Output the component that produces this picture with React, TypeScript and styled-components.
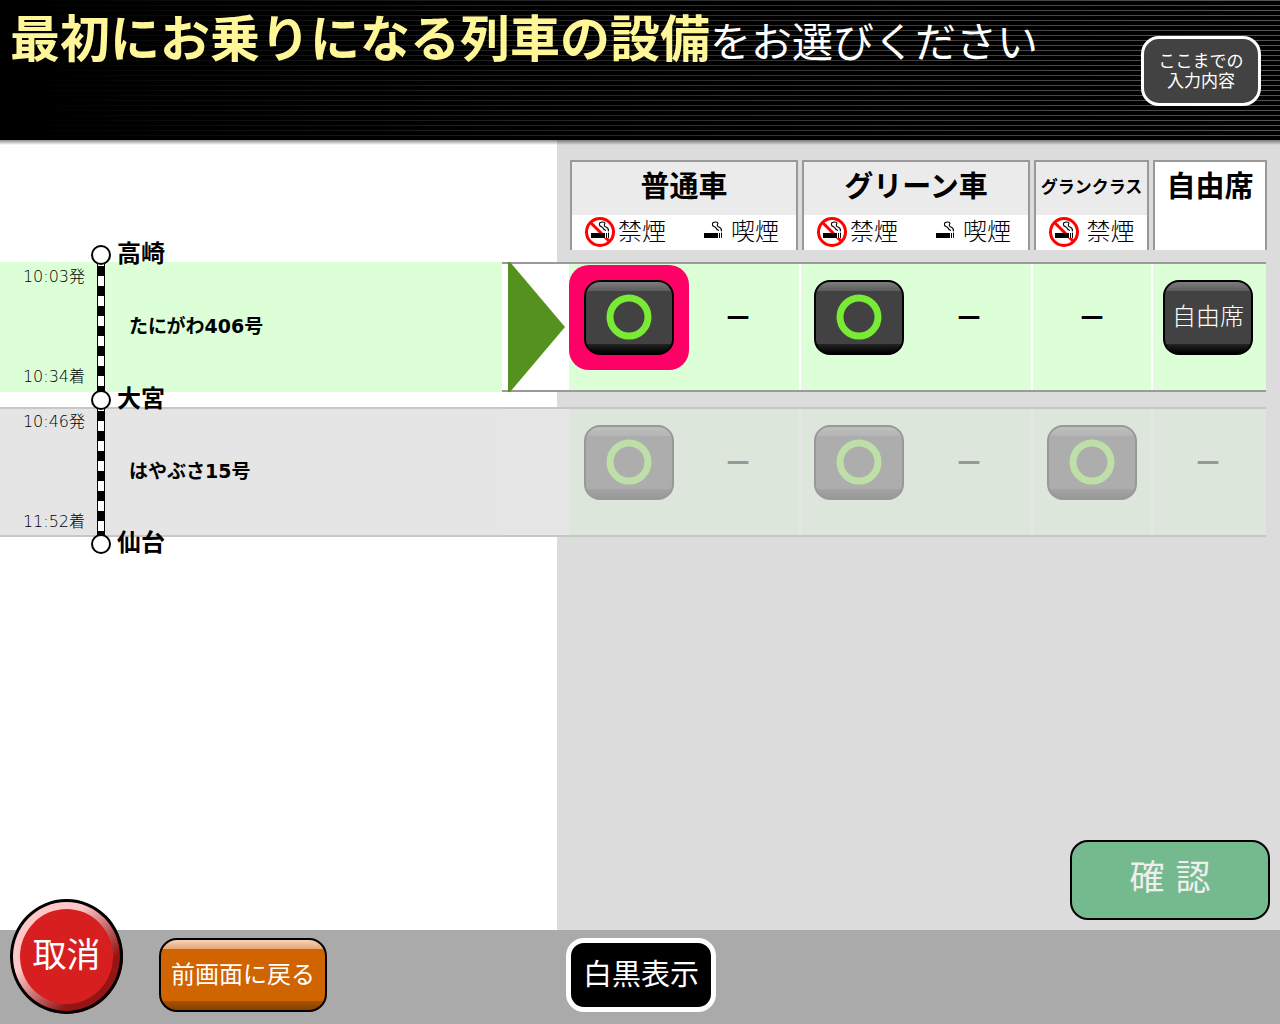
import React from "react";
import styled, { createGlobalStyle, css } from "styled-components";

const GlobalStyle = createGlobalStyle`
  *, *::before, *::after { box-sizing: border-box; }
  body {
    margin: 0;
    background: #dcdcdc;
    color: #000;
    font-family: "DejaVu Sans", "Noto Sans CJK JP", sans-serif;
    font-weight: 400;
  }
  button { font: inherit; padding: 0; cursor: pointer; }
  button:disabled { cursor: default; }
`;

const LINE = "#999";
const AVAILABLE = "#dcffd8";
const PANEL = "#dcdcdc";

const Page = styled.div`
  display: flex;
  flex-direction: column;
  min-height: 100vh;
`;

const Header = styled.header`
  display: flex;
  justify-content: space-between;
  align-items: flex-start;
  min-height: 140px;
  padding: 0 19px 0 10px;
  color: #fff;
  background:
    linear-gradient(to right, #000 20px, transparent),
    repeating-linear-gradient(to bottom, #555 0 1px, #000 1px 5px);
`;

const Title = styled.h1`
  margin: 10px 0 0;
  font-size: 41px;
  line-height: 60px;
  font-weight: 400;
`;

const TitleTarget = styled.strong`
  font-size: 50px;
  font-weight: 700;
  color: #fff797;
`;

const SummaryButton = styled.button`
  flex: none;
  width: 120px;
  height: 70px;
  margin-top: 36px;
  padding-bottom: 1px;
  border: 3px solid #fff;
  border-radius: 18px;
  background: #424242;
  color: #fff;
  font-size: 17px;
  line-height: 20px;
`;

const Main = styled.main`
  flex: 1;
  display: flex;
  flex-direction: column;
  padding-top: 15px;
  background: linear-gradient(to right, #fff calc(100% - 723px), ${PANEL} 0);

  &::before {
    content: "";
    height: 5px;
    margin-top: -15px;
    margin-bottom: 15px;
    background: linear-gradient(to bottom, rgba(0, 0, 0, 0.45), rgba(0, 0, 0, 0));
  }
`;

const SeatTable = styled.table`
  display: block;
`;

const TableHead = styled.thead`
  display: block;
`;

const HeadRow = styled.tr`
  display: grid;
  grid-template-columns: 1fr 228px 228px 115px 114px;
  column-gap: 4px;
  padding-right: 13px;
`;

const HeadSpace = styled.td`
  padding: 0;
`;

const HeadCell = styled.th<{ $plain?: boolean }>`
  height: 90px;
  padding: 0;
  border: 2px solid ${LINE};
  border-bottom: 0;
  background: ${({ $plain }) => ($plain ? "#fff" : "#ebebeb")};
  font-weight: 300;
`;

const ClassName = styled.div<{ $small?: boolean }>`
  height: 53px;
  font-size: ${({ $small }) => ($small ? 17 : 29)}px;
  line-height: 50px;
  font-weight: 700;
  text-align: center;
  white-space: nowrap;
`;

const SmokingList = styled.div<{ $single?: boolean }>`
  display: flex;
  align-items: flex-start;
  height: 35px;
  gap: 32px;
  padding-top: 2px;
  padding-left: ${({ $single }) => ($single ? 0 : 13)}px;
  justify-content: ${({ $single }) => ($single ? "center" : "flex-start")};
  background: #fff;
`;

const SmokingItem = styled.span<{ $gap: number }>`
  display: flex;
  align-items: flex-start;
  gap: ${({ $gap }) => $gap}px;
  font-size: 24px;
  line-height: 30px;
`;

const TableBody = styled.tbody`
  display: flex;
  flex-direction: column;
  gap: 15px;
  padding-top: 12px;
`;

const TrainRow = styled.tr`
  display: grid;
  grid-template-columns: 1fr 67px 232px 232px 120px 113px;
  height: 130px;
  padding-right: 14px;
`;

const RouteCell = styled.th<{ $active: boolean }>`
  position: relative;
  display: grid;
  grid-template-columns: 85px 8px 1fr;
  column-gap: 12px;
  padding: 0;
  font-weight: 300;
  text-align: left;
  ${({ $active }) =>
    $active
      ? css`
          background: ${AVAILABLE};
        `
      : css`
          background: #e5e5e5;
          box-shadow: inset 0 2px #c8c8c8, inset 0 -2px #c8c8c8;
        `}
`;

const Times = styled.div`
  display: flex;
  flex-direction: column;
  justify-content: space-between;
  align-items: flex-end;
  padding: 5px 0;
  font-size: 16px;
  line-height: 20px;
`;

const Rail = styled.div`
  border: solid #000;
  border-width: 0 1px;
  background: repeating-linear-gradient(
    to bottom,
    #fff 0 4px,
    #000 4px 14px,
    #fff 14px 20px
  );
`;

const TrainName = styled.div`
  align-self: center;
  padding: 0 0 2px 12px;
  font-size: 19px;
  line-height: 24px;
  font-weight: 700;
`;

const Station = styled.div<{ $end?: boolean }>`
  position: absolute;
  z-index: 1;
  left: 91px;
  ${({ $end }) => ($end ? "bottom: -17px;" : "top: -17px;")}
  display: flex;
  align-items: flex-start;
  gap: 6px;
  height: 20px;
  font-size: 24px;
  line-height: 18px;
  font-weight: 700;

  &::before {
    content: "";
    width: 20px;
    height: 20px;
    border: 2px solid #000;
    border-radius: 50%;
    background: #fff;
  }
`;

const PointerCell = styled.td`
  padding: 0;
  background: ${PANEL};
`;

const SeatCell = styled.td`
  padding: 0;
  background: ${PANEL};
`;

const Fade = styled.div<{ $off: boolean; $white?: boolean; $last?: boolean }>`
  height: 100%;
  display: flex;
  border: solid ${LINE};
  border-width: 2px 0;
  background: ${({ $white }) => ($white ? "#fff" : AVAILABLE)};
  opacity: ${({ $off }) => ($off ? 0.3 : 1)};

  &::after {
    content: "";
    flex: none;
    width: ${({ $white, $last }) => ($white || $last ? 0 : 2)}px;
    background: #fff;
  }
`;

const Arrow = styled.svg`
  flex: none;
  margin: -2px 0 -2px 6px;
`;

const Slots = styled.div<{ $columns: string }>`
  flex: 1;
  display: grid;
  grid-template-columns: ${({ $columns }) => $columns};
  grid-template-rows: 107px;
  align-items: center;
  justify-items: center;
`;

const Selection = styled.div<{ $on: boolean }>`
  padding: 15px;
  border-radius: 20px;
  background: ${({ $on }) => ($on ? "#ff0066" : "transparent")};
`;

const SeatButton = styled.button`
  display: flex;
  align-items: center;
  justify-content: center;
  width: 90px;
  height: 75px;
  padding-bottom: 2px;
  border: 2px solid #000;
  border-radius: 16px;
  background: linear-gradient(
    to bottom,
    #7c7c7c,
    #5c5c5c 9px,
    #424242 9px calc(100% - 9px),
    #242424 calc(100% - 9px),
    #000
  );
  color: #fff;
  font-size: 24px;
  line-height: 32px;
  font-weight: 300;
`;

const Dash = styled.span`
  padding-top: 2px;
  font-size: 29px;
  line-height: 32px;
  font-weight: 700;
`;

const ConfirmButton = styled.button`
  align-self: flex-end;
  width: 200px;
  height: 80px;
  margin: auto 10px 10px 0;
  padding-bottom: 4px;
  border: 2px solid #000;
  border-radius: 18px;
  background: #75b98e;
  color: #eee;
  font-size: 35px;
  line-height: 48px;
`;

const Footer = styled.footer`
  display: grid;
  grid-template-columns: 1fr auto 1fr;
  align-items: start;
  min-height: 94px;
  padding: 8px 0 12px 2px;
  background: #aaa;
`;

const FooterLeft = styled.div`
  display: flex;
  align-items: flex-start;
  gap: 36px;
  height: 74px;
  padding-left: 8px;
`;

const CancelButton = styled.button`
  flex: none;
  width: 113px;
  height: 115px;
  margin-top: -39px;
  padding-bottom: 3px;
  border: 10px solid transparent;
  border-radius: 50%;
  background:
    linear-gradient(#d71f1f, #d71f1f) padding-box,
    linear-gradient(135deg, #ffc8c8 35%, #951414 72%) border-box;
  color: #fff;
  font-size: 34px;
  line-height: 48px;
  outline: 3px solid #000;
  outline-offset: -3px;
`;

const BackButton = styled.button`
  flex: none;
  width: 168px;
  height: 74px;
  padding-bottom: 1px;
  border: 2px solid #000;
  border-radius: 18px;
  background: linear-gradient(
    to bottom,
    #fbd3b4,
    #e3a677 9px,
    #d06400 9px calc(100% - 9px),
    #ab5200 calc(100% - 9px),
    #854000
  );
  color: #fff;
  font-size: 24px;
  line-height: 32px;
`;

const ContrastButton = styled.button`
  width: 150px;
  height: 74px;
  padding-bottom: 1px;
  border: 5px solid #fff;
  border-radius: 18px;
  background: #000;
  color: #fff;
  font-size: 29px;
  line-height: 40px;
`;

function SmokingIcon({ banned }: { banned: boolean }) {
  return (
    <svg width="30" height="30" viewBox="0 0 30 30" aria-hidden="true">
      {banned && (
        <g fill="none" stroke="#f00" strokeWidth="3">
          <circle cx="15" cy="15" r="13.5" />
          <path d="M5.5 5.5 24.5 24.5" />
        </g>
      )}
      <path d="M6 16h14v5H6z" />
      <path d="M20 16h1v5h-1zM22 16h1v5h-1z" fill="#fff" />
      <path d="M21 16h1v5h-1zM23 16h1v5h-1z" />
      <path d="M23.5 12v4" stroke="#aaa" strokeWidth="1" />
      <g fill="none" stroke="#000" strokeWidth="1.1">
        <path d="M18 5c-3 0-4 1-3.500 3s3 1.500 3.500 3 1 2 3 2.500" />
        <path d="M18 5c2.500.5 2 1.500 1.500 2.500s0 2 1.500 2.500 2.500 1.500 2.500 4" />
      </g>
    </svg>
  );
}

function Ring() {
  return (
    <svg width="46" height="46" viewBox="0 0 46 46" aria-hidden="true">
      <circle cx="23" cy="23" r="19" fill="none" stroke="#7aeb34" strokeWidth="7" />
    </svg>
  );
}

type Slot = "open" | "none" | "free";

interface Train {
  name: string;
  from: string;
  to?: string;
  departs: string;
  arrives: string;
  active: boolean;
  seats: Slot[][];
}

const SLOT_COLUMNS = ["120px 98px", "116px 104px", "118px", "110px"];
const CLASS_NAMES = ["普通車", "グリーン車", "グランクラス", "自由席"];

const trains: Train[] = [
  {
    name: "たにがわ406号",
    from: "高崎",
    departs: "10:03発",
    arrives: "10:34着",
    active: true,
    seats: [["open", "none"], ["open", "none"], ["none"], ["free"]],
  },
  {
    name: "はやぶさ15号",
    from: "大宮",
    to: "仙台",
    departs: "10:46発",
    arrives: "11:52着",
    active: false,
    seats: [["open", "none"], ["open", "none"], ["open"], ["none"]],
  },
];

export default function App() {
  const [selected, setSelected] = React.useState("0-0-0");

  return (
    <Page>
      <GlobalStyle />
      <Header>
        <Title>
          <TitleTarget>最初にお乗りになる列車の設備</TitleTarget>をお選びください
        </Title>
        <SummaryButton type="button">
          ここまでの
          <br />
          入力内容
        </SummaryButton>
      </Header>

      <Main>
        <SeatTable>
          <TableHead>
            <HeadRow>
              <HeadSpace />
              {CLASS_NAMES.slice(0, 2).map((name) => (
                <HeadCell key={name} scope="col">
                  <ClassName>{name}</ClassName>
                  <SmokingList>
                    <SmokingItem $gap={3}>
                      <SmokingIcon banned />
                      禁煙
                    </SmokingItem>
                    <SmokingItem $gap={3}>
                      <SmokingIcon banned={false} />
                      喫煙
                    </SmokingItem>
                  </SmokingList>
                </HeadCell>
              ))}
              <HeadCell scope="col">
                <ClassName $small>{CLASS_NAMES[2]}</ClassName>
                <SmokingList $single>
                  <SmokingItem $gap={8}>
                    <SmokingIcon banned />
                    禁煙
                  </SmokingItem>
                </SmokingList>
              </HeadCell>
              <HeadCell scope="col" $plain>
                <ClassName>{CLASS_NAMES[3]}</ClassName>
              </HeadCell>
            </HeadRow>
          </TableHead>

          <TableBody>
            {trains.map((train, row) => (
              <TrainRow key={train.name}>
                <RouteCell scope="row" $active={train.active}>
                  <Station>{train.from}</Station>
                  <Times>
                    <span>{train.departs}</span>
                    <span>{train.arrives}</span>
                  </Times>
                  <Rail />
                  <TrainName>{train.name}</TrainName>
                  {train.to && <Station $end>{train.to}</Station>}
                </RouteCell>
                <PointerCell>
                  <Fade $off={!train.active} $white>
                    {train.active && (
                      <Arrow width="57" height="130" viewBox="0 0 57 130" aria-hidden="true">
                        <path d="M0 0h2l55 65-55 65H0z" fill="#55911f" />
                      </Arrow>
                    )}
                  </Fade>
                </PointerCell>
                {train.seats.map((slots, col) => (
                  <SeatCell key={col}>
                    <Fade $off={!train.active} $last={col === 3}>
                      <Slots $columns={SLOT_COLUMNS[col]}>
                        {slots.map((slot, i) => {
                          const id = `${row}-${col}-${i}`;
                          if (slot === "none") return <Dash key={id}>－</Dash>;
                          return (
                            <Selection key={id} $on={selected === id}>
                              <SeatButton
                                type="button"
                                disabled={!train.active}
                                aria-label={slot === "open" ? CLASS_NAMES[col] : undefined}
                                onClick={() => setSelected(id)}
                              >
                                {slot === "open" ? <Ring /> : "自由席"}
                              </SeatButton>
                            </Selection>
                          );
                        })}
                      </Slots>
                    </Fade>
                  </SeatCell>
                ))}
              </TrainRow>
            ))}
          </TableBody>
        </SeatTable>

        <ConfirmButton type="button">確 認</ConfirmButton>
      </Main>

      <Footer>
        <FooterLeft>
          <CancelButton type="button">取消</CancelButton>
          <BackButton type="button">前画面に戻る</BackButton>
        </FooterLeft>
        <ContrastButton type="button">白黒表示</ContrastButton>
      </Footer>
    </Page>
  );
}
